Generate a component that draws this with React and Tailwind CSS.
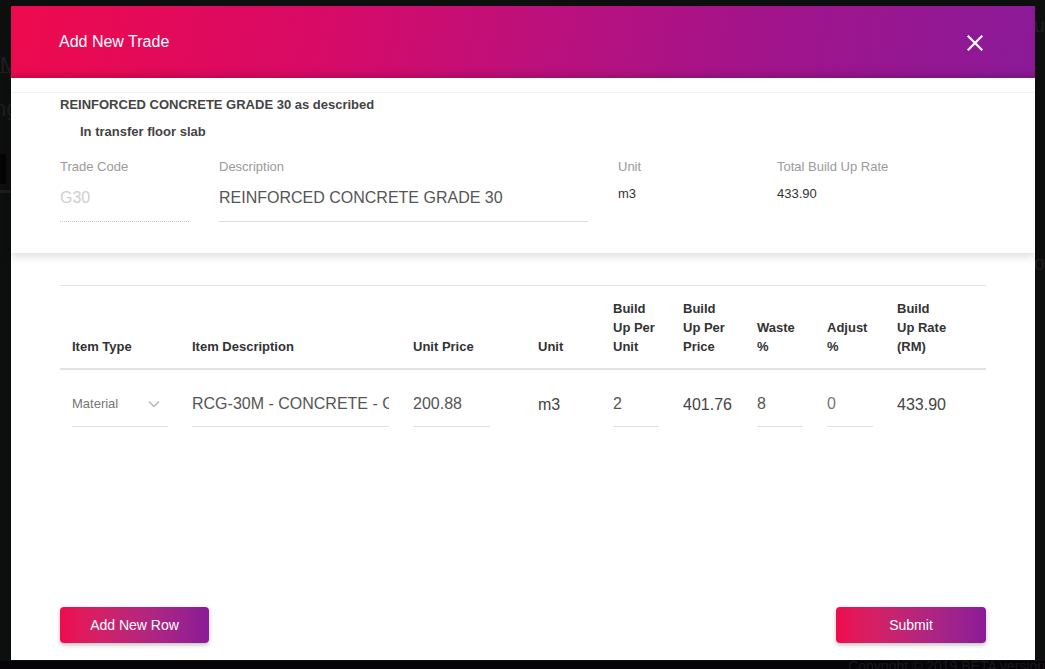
import React from "react";

const font = { fontFamily: '"Liberation Sans", Arial, sans-serif' };

function Underlined({ children, className = "", text = "text-[16px] text-[#555]" }) {
  return (
    <div className={`h-[45px] flex items-center border-b border-[#e0e0e0] overflow-hidden whitespace-nowrap ${text} ${className}`}>
      {children}
    </div>
  );
}

export default function App() {
  const cols = [
    { w: "w-[120px]", head: ["Item Type"] },
    { w: "w-[221px]", head: ["Item Description"] },
    { w: "w-[125px]", head: ["Unit Price"] },
    { w: "w-[75px]", head: ["Unit"] },
    { w: "w-[70px]", head: ["Build", "Up Per", "Unit"] },
    { w: "w-[74px]", head: ["Build", "Up Per", "Price"] },
    { w: "w-[70px]", head: ["Waste", "%"] },
    { w: "w-[70px]", head: ["Adjust", "%"] },
    { w: "w-[101px]", head: ["Build", "Up Rate", "(RM)"] },
  ];

  return (
    <div className="w-[1045px] h-[669px] bg-[#0d0e0e] overflow-hidden relative" style={font}>
      {/* faint page behind the backdrop */}
      <div className="absolute left-0 top-[48px] text-[22px] text-[#1d1f1f]">M</div>
      <div className="absolute left-0 top-[72px] w-[11px] h-px bg-[#1c1d1d]"></div>
      <div className="absolute left-[-6px] top-[92px] text-[22px] text-[#1d1f1f]">ng</div>
      <div className="absolute left-0 top-[154px] w-[6px] h-[30px] bg-[#050507]"></div>
      <div className="absolute left-0 top-[190px] w-[11px] h-[3px] bg-[#1c1d1d]"></div>
      <div className="absolute right-0 top-[10px] text-[20px] text-[#1d1f1f]">Bu</div>
      <div className="absolute right-0 top-[248px] text-[20px] text-[#1d1f1f]">Co</div>
      <div className="absolute left-0 right-0 top-[661px] h-[8px] bg-[#060408]"></div>
      <div className="absolute right-[0px] top-[656px] text-[14px] text-[#18181b]">Copyright © 2019 BETA version</div>

      <div className="relative pt-[6px] pl-[11px]">
        <div className="w-[1024px] h-[654px] bg-white flex flex-col">
          {/* Header */}
          <div className="h-[72px] shrink-0 flex items-center justify-between pl-[48px] pr-[52px] bg-[linear-gradient(100deg,#ee0a4e_0%,#d80a66_30%,#b8117f_55%,#a0148c_75%,#8b1a98_100%)] shadow-[inset_0_-8px_10px_-6px_rgba(0,0,0,0.18)]">
            <div className="text-white text-[16px]">Add New Trade</div>
            <svg width="16" height="16" viewBox="0 0 16 16" className="mt-[1px]">
              <path d="M1.5 1.5 L14.5 14.5 M14.5 1.5 L1.5 14.5" stroke="white" strokeWidth="2.2" strokeLinecap="square" />
            </svg>
          </div>

          {/* Trade card */}
          <div className="shrink-0 pt-[14px] pb-[31px] shadow-[0_4px_8px_rgba(0,0,0,0.12)] relative">
            <div className="border-t border-[#f3f3f3] pl-[49px] pt-[4px]">
              <div className="text-[13px] leading-[16px] font-bold text-[#444]">REINFORCED CONCRETE GRADE 30 as described</div>
              <div className="mt-[11px] pl-[20px] text-[13px] leading-[16px] font-bold text-[#444]">In transfer floor slab</div>
              <div className="mt-[19px] flex">
                <div className="w-[129px]">
                  <div className="text-[13px] leading-[16px] text-[#9a9a9a]">Trade Code</div>
                  <div className="h-[47px] flex items-center text-[16px] text-[#cfcfcf] border-b border-dotted border-[#c8c8c8]">G30</div>
                </div>
                <div className="w-[369px] ml-[30px]">
                  <div className="text-[13px] leading-[16px] text-[#9a9a9a]">Description</div>
                  <div className="h-[47px] flex items-center text-[16px] text-[#555] border-b border-[#dedede]">REINFORCED CONCRETE GRADE 30</div>
                </div>
                <div className="w-[129px] ml-[30px]">
                  <div className="text-[13px] leading-[16px] text-[#9a9a9a]">Unit</div>
                  <div className="mt-[11px] text-[13px] leading-[16px] text-[#333]">m3</div>
                </div>
                <div className="ml-[30px]">
                  <div className="text-[13px] leading-[16px] text-[#9a9a9a]">Total Build Up Rate</div>
                  <div className="mt-[11px] text-[13px] leading-[16px] text-[#333]">433.90</div>
                </div>
              </div>
            </div>
          </div>

          {/* Table */}
          <div className="mx-[49px] mt-[32px] border-t border-[#e3e3e3]">
            <div className="flex border-b-2 border-[#e2e2e2]">
              {cols.map((c, i) => (
                <div key={i} className={`${c.w} px-[12px] pt-[13px] pb-[12px] flex flex-col justify-end text-[13px] leading-[19px] font-bold text-[#333]`}>
                  {c.head.map((h, j) => (
                    <div key={j}>{h}</div>
                  ))}
                </div>
              ))}
            </div>
            <div className="flex pt-[12px]">
              <div className="w-[120px] px-[12px]">
                <Underlined text="text-[13px] text-[#777]" className="justify-between pr-[8px]">
                  <span>Material</span>
                  <svg width="12" height="8" viewBox="0 0 12 8">
                    <polyline points="1,1.5 6,6.5 11,1.5" fill="none" stroke="#b5b5b5" strokeWidth="1.3" />
                  </svg>
                </Underlined>
              </div>
              <div className="w-[221px] px-[12px]">
                <Underlined>RCG-30M - CONCRETE - GRADE 30</Underlined>
              </div>
              <div className="w-[125px] pl-[12px] pr-[36px]">
                <Underlined>200.88</Underlined>
              </div>
              <div className="w-[75px] px-[12px] h-[45px] flex items-center text-[16px] text-[#444]">m3</div>
              <div className="w-[70px] px-[12px]">
                <Underlined>2</Underlined>
              </div>
              <div className="w-[74px] px-[12px] h-[45px] flex items-center text-[16px] text-[#444] whitespace-nowrap">401.76</div>
              <div className="w-[70px] px-[12px]">
                <Underlined>8</Underlined>
              </div>
              <div className="w-[70px] px-[12px]">
                <Underlined text="text-[16px] text-[#777]">0</Underlined>
              </div>
              <div className="w-[101px] px-[12px] h-[45px] flex items-center text-[16px] text-[#444]">433.90</div>
            </div>
          </div>

          <div className="flex-1"></div>

          {/* Buttons */}
          <div className="flex justify-between px-[49px] pb-[17px]">
            <button className="w-[149px] h-[36px] rounded-[4px] text-white text-[14px] bg-linear-to-r from-[#ee0a4e] to-[#8b1a98] shadow-[0_2px_4px_rgba(0,0,0,0.25)]">Add New Row</button>
            <button className="w-[150px] h-[36px] rounded-[4px] text-white text-[14px] bg-linear-to-r from-[#ee0a4e] to-[#8b1a98] shadow-[0_2px_4px_rgba(0,0,0,0.25)]">Submit</button>
          </div>
        </div>
      </div>
    </div>
  );
}
